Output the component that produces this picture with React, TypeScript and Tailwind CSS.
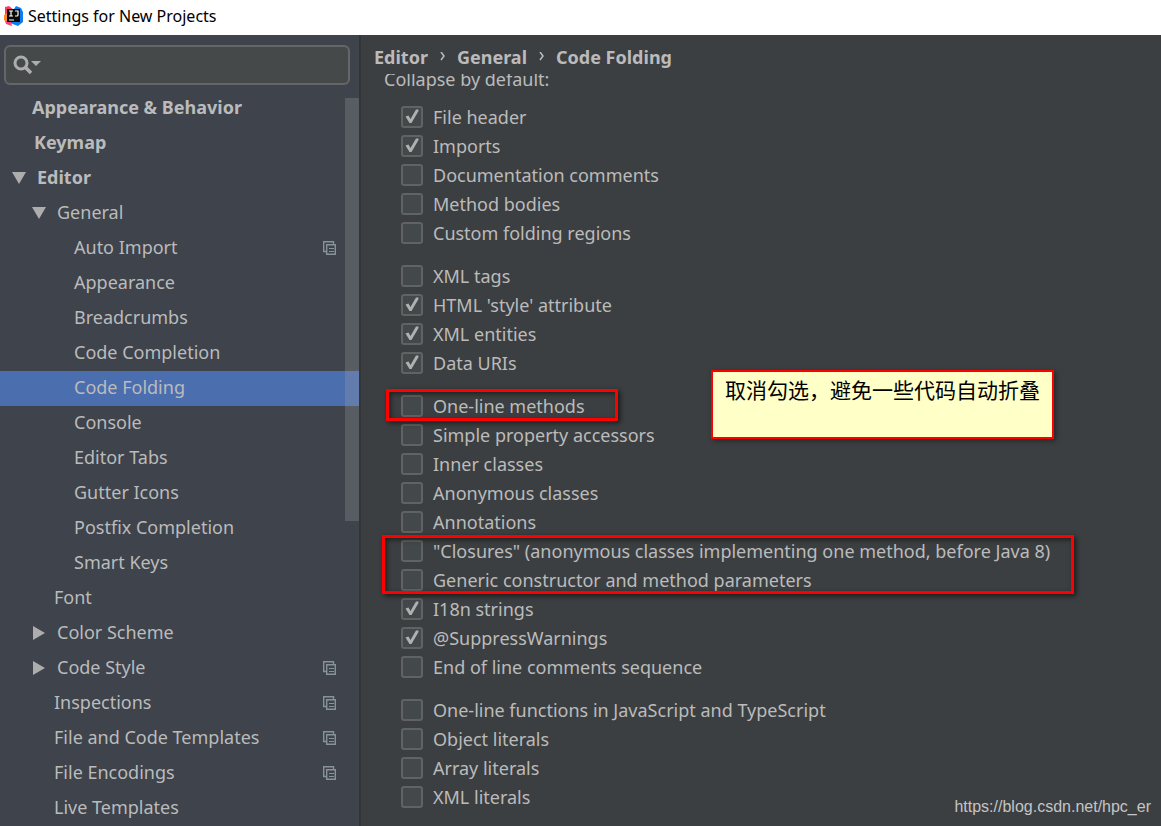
import { useState } from "react";

type TreeItem = {
  label: string;
  indent: string;
  bold?: boolean;
  arrow?: "down" | "right";
  perProject?: boolean;
  selected?: boolean;
};

const tree: TreeItem[] = [
  { label: "Appearance & Behavior", indent: "pl-8", bold: true },
  { label: "Keymap", indent: "pl-[34px]", bold: true },
  { label: "Editor", indent: "pl-3", bold: true, arrow: "down" },
  { label: "General", indent: "pl-8", arrow: "down" },
  { label: "Auto Import", indent: "pl-[74px]", perProject: true },
  { label: "Appearance", indent: "pl-[74px]" },
  { label: "Breadcrumbs", indent: "pl-[74px]" },
  { label: "Code Completion", indent: "pl-[74px]" },
  { label: "Code Folding", indent: "pl-[74px]", selected: true },
  { label: "Console", indent: "pl-[74px]" },
  { label: "Editor Tabs", indent: "pl-[74px]" },
  { label: "Gutter Icons", indent: "pl-[74px]" },
  { label: "Postfix Completion", indent: "pl-[74px]" },
  { label: "Smart Keys", indent: "pl-[74px]" },
  { label: "Font", indent: "pl-[54px]" },
  { label: "Color Scheme", indent: "pl-8", arrow: "right" },
  { label: "Code Style", indent: "pl-8", arrow: "right", perProject: true },
  { label: "Inspections", indent: "pl-[54px]", perProject: true },
  { label: "File and Code Templates", indent: "pl-[54px]", perProject: true },
  { label: "File Encodings", indent: "pl-[54px]", perProject: true },
  { label: "Live Templates", indent: "pl-[54px]" },
];

const groups: [string, boolean][][] = [
  [
    ["File header", true],
    ["Imports", true],
    ["Documentation comments", false],
    ["Method bodies", false],
    ["Custom folding regions", false],
  ],
  [
    ["XML tags", false],
    ["HTML 'style' attribute", true],
    ["XML entities", true],
    ["Data URIs", true],
  ],
  [
    ["One-line methods", false],
    ["Simple property accessors", false],
    ["Inner classes", false],
    ["Anonymous classes", false],
    ["Annotations", false],
    ['"Closures" (anonymous classes implementing one method, before Java 8)', false],
    ["Generic constructor and method parameters", false],
    ["I18n strings", true],
    ["@SuppressWarnings", true],
    ["End of line comments sequence", false],
  ],
  [
    ["One-line functions in JavaScript and TypeScript", false],
    ["Object literals", false],
    ["Array literals", false],
    ["XML literals", false],
  ],
];

function Logo() {
  return (
    <svg width="20" height="22" viewBox="0 0 20 22" aria-hidden="true">
      <path d="M1 2 5 1l5 4-2 12-7-2z" fill="#fc3b6b" />
      <path d="M0 10 3 8l4 8-3 3-4-4z" fill="#fb8a2c" />
      <path d="M12 1l5 2 2 4v10l-5 4-8-3 4-14z" fill="#0f7cf0" />
      <path d="M1 16l6 1 1 4-6-2z" fill="#f5447c" />
      <rect x="3" y="4" width="13" height="13" fill="#0a0a0a" />
      <path d="M5 6h4M7 6v5M5 11h4M11 6h3v4q0 1-1 1h-2M5 15h5" fill="none" stroke="#fff" strokeWidth="1.2" />
    </svg>
  );
}

function Arrow({ dir }: { dir: "down" | "right" }) {
  return (
    <svg width="14" height="14" viewBox="0 0 14 14" className="shrink-0" aria-hidden="true">
      <path d={dir === "down" ? "M0 1h14L7 13z" : "M1 0l12 7-12 7z"} fill="#adadad" />
    </svg>
  );
}

function CopyIcon() {
  return (
    <svg width="13" height="14" viewBox="0 0 13 14" className="shrink-0" fill="none" stroke="#87939a" aria-hidden="true">
      <path d="M10.5 3V.7H.7v9.8H3" strokeWidth="1.4" />
      <path d="M3.7 3.7h8.6v9.6H3.7z" strokeWidth="1.4" />
      <path d="M6 7.5h5M6 10.5h5" />
    </svg>
  );
}

function Chevron() {
  return (
    <svg width="5" height="10" viewBox="0 0 5 10" fill="none" stroke="#bbbbbb" strokeWidth="1.5" aria-hidden="true">
      <path d="M1 0l3 4-3 4" />
    </svg>
  );
}

function Option({ label, initial }: { label: string; initial: boolean }) {
  const [on, setOn] = useState(initial);
  return (
    <label className="flex h-[29px] items-center gap-[10px] whitespace-nowrap">
      <span className="grid size-[22px] place-items-center">
        <input
          type="checkbox"
          checked={on}
          onChange={() => setOn(!on)}
          className="col-start-1 row-start-1 size-[22px] appearance-none rounded-[3px] border-2 border-[#606263] bg-[#43494a]"
        />
        {on && (
          <svg width="14" height="15" viewBox="0 0 14 15" className="pointer-events-none col-start-1 row-start-1" aria-hidden="true">
            <path d="M.5 7.5 3.5 6.5 5.5 10 11 .5h2.5v1.5L6.5 14H4.5z" fill="#b0b0b0" />
          </svg>
        )}
      </span>
      {label}
    </label>
  );
}

export default function App() {
  return (
    <div className="flex min-h-screen flex-col bg-[#3c3f41] font-['Noto_Sans','Noto_Sans_CJK_SC',sans-serif] text-lg text-[#bbbbbb]">
      <header className="flex h-[35px] items-center gap-1 bg-white px-1 pb-1 text-base text-black">
        <Logo />
        <h1>Settings for New Projects</h1>
      </header>
      <div className="flex flex-1">
        <aside className="relative w-[361px] shrink-0 border-r-2 border-[#323436] bg-[#3e434c]">
          <div className="px-1 pt-[10px] pb-[6px]">
            <div className="mr-[5px] flex h-10 items-center rounded-md border-2 border-[#646667] bg-[#45494a] pl-[7px]">
              <svg width="28" height="20" viewBox="0 0 28 20" className="shrink-0" aria-hidden="true">
                <circle cx="8" cy="8" r="6" fill="none" stroke="#adadad" strokeWidth="3" />
                <path d="M12 12l6 6" stroke="#adadad" strokeWidth="3.5" />
                <path d="M18 6h10l-5 5z" fill="#adadad" />
              </svg>
              <input type="text" aria-label="Search settings" className="min-w-0 flex-1 bg-transparent px-2 outline-none" />
            </div>
          </div>
          <nav>
            {tree.map((t) => (
              <a
                key={t.label}
                href="#"
                className={`flex h-[35px] items-center whitespace-nowrap pr-[23px] pb-[2px] ${t.indent} ${t.bold ? "font-bold" : ""} ${t.selected ? "bg-[#4b6eaf]" : ""}`}
              >
                {t.arrow && (
                  <span className="mr-[11px] flex">
                    <Arrow dir={t.arrow} />
                  </span>
                )}
                <span className="flex-1 pb-px">{t.label}</span>
                {t.perProject && <CopyIcon />}
              </a>
            ))}
          </nav>
          <div className="absolute top-[63px] right-0 h-[423px] w-[14px] bg-[#a6a6a6]/25" />
        </aside>
        <main className="relative min-w-0 flex-1 overflow-hidden">
          <nav aria-label="Breadcrumb" className="flex h-[39px] items-center gap-3 pt-1 pl-[13px] font-bold">
            <span>Editor</span>
            <Chevron />
            <span>General</span>
            <Chevron />
            <span>Code Folding</span>
          </nav>
          <div className="overflow-hidden">
            <p className="-mt-[9px] pl-[23px] leading-7">Collapse by default:</p>
            <div className="flex flex-col gap-[14px] pt-[9px] pl-10">
              {groups.map((g) => (
                <div key={g[0][0]}>
                  {g.map(([label, initial]) => (
                    <Option key={label} label={label} initial={initial} />
                  ))}
                </div>
              ))}
            </div>
          </div>
          <div className="pointer-events-none absolute top-[354px] left-[25px] h-8 w-[232px] border-3 border-[#ff0000] shadow-[2px_2px_5px_rgba(0,0,0,0.6),inset_2px_2px_5px_rgba(0,0,0,0.5)]" />
          <div className="pointer-events-none absolute top-[500px] left-[21px] h-[59px] w-[692px] border-3 border-[#ff0000] shadow-[2px_2px_5px_rgba(0,0,0,0.6),inset_2px_2px_5px_rgba(0,0,0,0.5)]" />
          <div className="absolute top-[335px] left-[350px] h-[69px] w-[343px] border-2 border-[#ff0000] bg-[#ffffc8] px-3 pt-px font-['Noto_Sans_CJK_SC',sans-serif] text-[21px] leading-8 whitespace-nowrap text-black shadow-[2px_2px_5px_rgba(0,0,0,0.4)]">
            取消勾选，避免一些代码自动折叠
          </div>
          <div className="absolute right-[10px] bottom-[7px] font-['Liberation_Sans',sans-serif] text-base text-[#c4c5c6]">
            https://blog.csdn.net/hpc_er
          </div>
        </main>
      </div>
    </div>
  );
}
